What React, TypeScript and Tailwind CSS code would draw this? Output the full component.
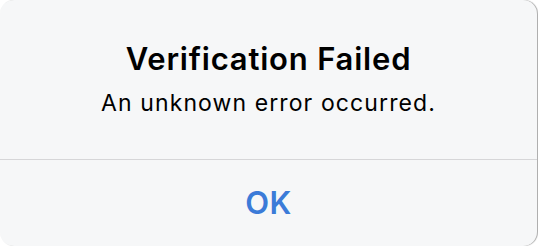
export default function App() {
  return (
    <div className="w-[538px] h-[246px] bg-white" style={{ fontFamily: "Inter, 'Noto Sans', sans-serif" }}>
      <div className="w-[537px] h-[246px] rounded-[14px] bg-[#f6f7f8] shadow-[1px_0_1px_rgba(0,0,0,0.35)] flex flex-col overflow-hidden">
        <div className="flex flex-col items-center pt-[41px] pb-[42px]">
          <div className="text-[31px] leading-[36px] font-semibold text-black tracking-[0.8px]">Verification Failed</div>
          <div className="mt-3 text-[23px] leading-[28px] text-black tracking-[1.1px]">An unknown error occurred.</div>
        </div>
        <div className="h-px bg-[#d6d6d8]" />
        <div className="flex-1 flex items-center justify-center">
          <span className="text-[31px] leading-[36px] font-semibold text-[#3b7bd8] tracking-[0.5px]">OK</span>
        </div>
      </div>
    </div>
  );
}
